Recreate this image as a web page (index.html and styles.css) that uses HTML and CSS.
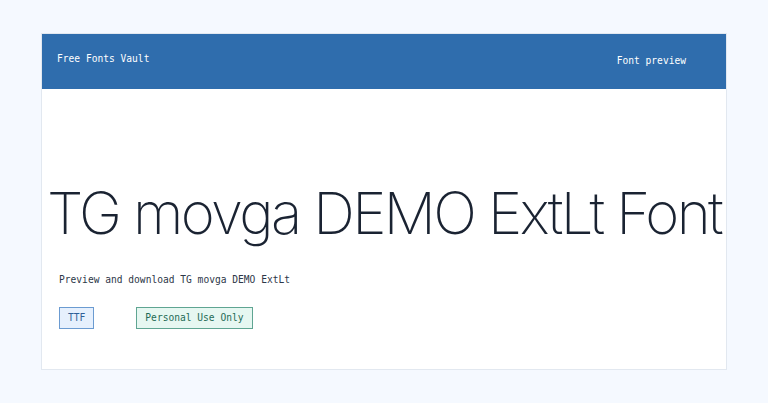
FILE: index.html
```html
<!DOCTYPE html>
<html lang="en">
<head>
    <meta charset="UTF-8">
    <meta name="viewport" content="width=device-width, initial-scale=1.0">
    <title>TG movga DEMO ExtLt Font</title>
    <link rel="stylesheet" href="styles.css">
</head>
<body>
    <div class="page">
        <header class="topbar">
            <div class="brand">Free Fonts Vault</div>
            <nav class="nav">Font preview</nav>
        </header>

        <main class="content">
            <h1 class="specimen">TG movga DEMO ExtLt Font</h1>
            <p class="intro">Preview and download TG movga DEMO ExtLt</p>
            <div class="tags">
                <span class="tag tag-format">TTF</span>
                <span class="tag tag-license">Personal Use Only</span>
            </div>
        </main>
    </div>
</body>
</html>
```

FILE: styles.css
```css
body {
    margin: 0;
    background-color: #f5f9ff;
    font-family: 'DejaVu Sans Mono', monospace;
    font-size: 9.6px;
}

.page {
    width: 686px;
    margin: 33px auto 0;
    background-color: #fff;
    border: 1px solid #e2e8f0;
    box-sizing: border-box;
}

.topbar {
    display: flex;
    justify-content: space-between;
    align-items: center;
    height: 55px;
    padding: 0 40px 0 15px;
    background-color: #2f6dad;
    color: #fff;
}

.brand {
    margin-top: -7px;
}

.nav {
    margin-top: -3px;
}

.content {
    padding: 89px 17px 40px;
}

/* big specimen line, kept on one row */
.specimen {
    margin: 0 -20px;
    text-align: center;
    font-family: 'Inter', sans-serif;
    font-weight: 200;
    font-size: 58px;
    line-height: 70px;
    letter-spacing: -2.6px;
    color: #1a2332;
    white-space: nowrap;
}

.intro {
    margin: 26px 0 0;
    line-height: 11px;
    color: #2d3748;
}

.tags {
    display: flex;
    gap: 42px;
    margin-top: 22px;
}

.tag {
    padding: 5px 8px;
    border: 1px solid;
    line-height: 10px;
}

.tag-format {
    background-color: #e6f0fd;
    border-color: #6b9bd1;
    color: #2f5f97;
}

.tag-license {
    background-color: #e6f7f1;
    border-color: #5fa592;
    color: #1f6b55;
}
```
